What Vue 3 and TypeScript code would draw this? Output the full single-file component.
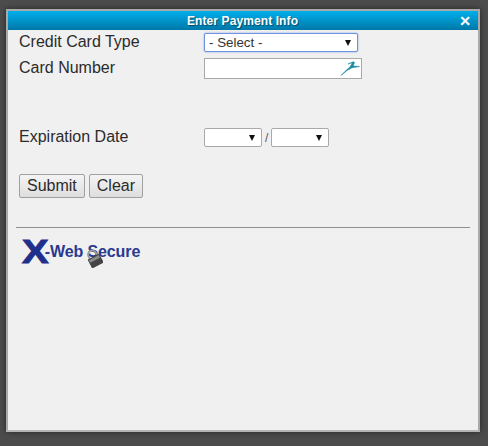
<script setup lang="ts">
import { ref } from 'vue'

const cardNumber = ref('')

function clearForm() {
  cardNumber.value = ''
}
</script>

<template>
  <div class="page">
    <div class="dialog">
      <div class="titlebar">
        <span class="title">Enter Payment Info</span>
        <span class="close">✕</span>
      </div>
      <form class="body" @submit.prevent>
        <div class="row row-type">
          <label class="label">Credit Card Type</label>
          <div class="fake-select type-select">
            <span>- Select -</span>
            <span class="arrow"></span>
          </div>
        </div>
        <div class="row row-number">
          <label class="label">Card Number</label>
          <div class="card-input">
            <input v-model="cardNumber" type="text" />
            <svg class="pen" viewBox="0 0 20 15" fill="none">
              <path d="M1 14.5 L7 8.5 L10 6 L12.5 1.5 L8 3 L13.5 0.8 L14.5 1.5 L13 5 L19.5 5.5 L12 6.8 L7 9.5 Z" fill="#1a8a9c" stroke="#1a8a9c" stroke-width="0.6" />
            </svg>
          </div>
        </div>
        <div class="row row-exp">
          <label class="label">Expiration Date</label>
          <div class="exp">
            <div class="fake-select exp-select"><span class="arrow"></span></div>
            <span class="slash">/</span>
            <div class="fake-select exp-select"><span class="arrow"></span></div>
          </div>
        </div>
        <div class="buttons">
          <button type="submit">Submit</button>
          <button type="button" @click="clearForm">Clear</button>
        </div>
        <hr class="rule" />
        <div class="logo">
          <span class="logo-x">X</span>
          <span class="logo-text">-Web Secure</span>
          <svg class="lock" viewBox="0 0 18 20">
            <g transform="rotate(-28 9 10)">
              <path d="M5 9 V6 a4 4 0 0 1 8 0 V9" fill="none" stroke="#9a9a9a" stroke-width="2" />
              <rect x="2.5" y="8.5" width="13" height="10" rx="1" fill="#444" />
              <rect x="3.5" y="9.5" width="11" height="3" fill="#8a8a8a" />
            </g>
          </svg>
        </div>
      </form>
    </div>
  </div>
</template>

<style>
html,
body {
  margin: 0;
  background: #4c4c4c;
}
</style>

<style scoped>
.page {
  width: 488px;
  height: 446px;
  padding: 9px 8px 0 6px;
  box-sizing: border-box;
  background: #4c4c4c;
  font-family: 'Liberation Sans', Arial, sans-serif;
  overflow: hidden;
}

.dialog {
  width: 474px;
  height: 423px;
  box-sizing: border-box;
  border: 2px solid #a9a9a9;
  border-bottom-color: #b5b5b5;
  background: #f0f0f0;
  box-shadow: 0 0 6px rgba(0, 0, 0, 0.5);
}

.titlebar {
  position: relative;
  height: 19px;
  display: flex;
  align-items: center;
  justify-content: center;
  background: linear-gradient(180deg, #00aeea 0%, #0078a8 100%);
  color: #fff;
}

.title {
  font-size: 12px;
  font-weight: bold;
  letter-spacing: 0.1px;
  margin-left: -1px;
  text-shadow: 1px 1px 1px rgba(0, 0, 0, 0.45);
}

.close {
  position: absolute;
  right: 7px;
  top: 2px;
  font-size: 14px;
  line-height: 17px;
  font-weight: bold;
  font-family: 'DejaVu Sans', sans-serif;
  -webkit-text-stroke: 0.6px #fff;
}

.body {
  padding: 0 8px;
}

.row {
  display: flex;
  align-items: flex-start;
  color: #2b2b2b;
}

.row-type {
  padding-top: 3px;
  height: 25px;
}

.row-number {
  height: 70px;
}

.row-number .label {
  padding-top: 1px;
}

.row-exp {
  height: 46px;
}

.label {
  width: 188px;
  padding-left: 3px;
  box-sizing: border-box;
  font-size: 16px;
  line-height: 18px;
  flex-shrink: 0;
}

.fake-select {
  display: flex;
  align-items: center;
  justify-content: space-between;
  box-sizing: border-box;
  background: #fff;
  border: 1px solid #a9a9a9;
  border-radius: 2px;
  font-size: 13.33px;
  color: #333;
}

.type-select {
  width: 154px;
  height: 19px;
  padding: 0 6px 0 4px;
  border-color: #6f93e0;
  box-shadow: 0 0 2px #7d9fe8;
}

.arrow {
  width: 0;
  height: 0;
  border-left: 3.5px solid transparent;
  border-right: 3.5px solid transparent;
  border-top: 6px solid #111;
}

.card-input {
  position: relative;
  width: 158px;
  height: 21px;
}

.card-input input {
  width: 100%;
  height: 100%;
  box-sizing: border-box;
  border: 1px solid #a9a9a9;
  background: #fff;
  padding: 0;
  outline: none;
}

.pen {
  position: absolute;
  right: 2px;
  top: 3px;
  width: 20px;
  height: 15px;
}

.exp {
  display: flex;
  align-items: center;
  gap: 3px;
}

.exp-select {
  width: 58px;
  height: 19px;
  justify-content: flex-end;
  padding-right: 6px;
}

.slash {
  font-size: 12px;
  color: #555;
}

.buttons {
  display: flex;
  gap: 4px;
  padding-left: 3px;
}

.buttons button {
  height: 24px;
  padding: 0 7px;
  box-sizing: border-box;
  font-family: inherit;
  font-size: 16px;
  color: #2b2b2b;
  background: linear-gradient(180deg, #f4f4f4, #dedede);
  border: 1px solid #a0a0a0;
  border-radius: 2px;
}

.rule {
  margin: 29px 0 0;
  height: 0;
  border: 0;
  border-top: 1px solid #8f8f8f;
}

.logo {
  position: relative;
  display: flex;
  align-items: center;
  height: 34px;
  margin-top: 6px;
  padding-left: 6px;
  color: #2a3a8e;
  font-weight: bold;
}

.logo-x {
  font-family: 'Liberation Sans', sans-serif;
  font-size: 34px;
  line-height: 30px;
  color: #1f2f8c;
  -webkit-text-stroke: 1px #1f2f8c;
  transform: scaleX(1.17);
  transform-origin: left center;
}

.logo-text {
  font-size: 16px;
  margin-left: 0;
  margin-top: 1px;
  letter-spacing: -0.1px;
}

.lock {
  position: absolute;
  left: 69px;
  top: 14px;
  width: 18px;
  height: 20px;
}
</style>
